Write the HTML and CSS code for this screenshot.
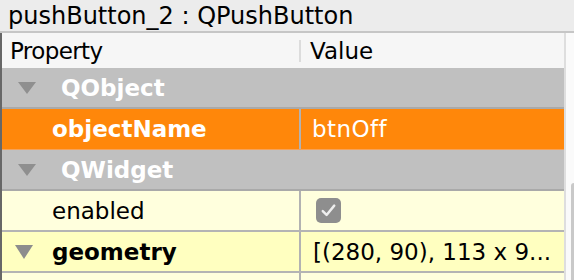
FILE: index.html
```html
<!DOCTYPE html>
<html>
<head>
<meta charset="utf-8">
<link rel="stylesheet" href="styles.css">
</head>
<body>
<div class="title">pushButton_2 : QPushButton</div>
<div class="main">
  <div class="table">
    <div class="row header">
      <div class="cell name"><span class="label">Property</span></div>
      <div class="hsep"></div>
      <div class="cell value">Value</div>
    </div>
    <div class="row group">
      <div class="cell name"><span class="tri"></span><span class="gtext">QObject</span></div>
      <div class="cell value"></div>
    </div>
    <div class="row selected">
      <div class="cell name"><span class="ptext bold">objectName</span></div>
      <div class="vsep"></div>
      <div class="cell value">btnOff</div>
    </div>
    <div class="row group">
      <div class="cell name"><span class="tri"></span><span class="gtext">QWidget</span></div>
      <div class="cell value"></div>
    </div>
    <div class="row light">
      <div class="cell name"><span class="ptext">enabled</span></div>
      <div class="vsep"></div>
      <div class="cell value"><span class="check"><svg width="17" height="15" viewBox="0 0 16 14"><path d="M2.6 7.6 L6.2 11.2 L13.4 2.4" fill="none" stroke="#eeeeee" stroke-width="2.3" stroke-linecap="round" stroke-linejoin="round"/></svg></span></div>
    </div>
    <div class="row dark">
      <div class="cell name"><span class="tri tri-y"></span><span class="ptext bold gp">geometry</span></div>
      <div class="vsep"></div>
      <div class="cell value">[(280, 90), 113 x 9...</div>
    </div>
    <div class="row light last">
      <div class="cell name"></div>
      <div class="vsep"></div>
      <div class="cell value"></div>
    </div>
  </div>
  <div class="scroll"><div class="thumb"></div></div>
</div>
</body>
</html>
```
FILE: styles.css
```css
html, body {
  margin: 0;
  padding: 0;
  width: 574px;
  height: 280px;
  overflow: hidden;
  background: #ececec;
  font-family: "DejaVu Sans", Verdana, sans-serif;
  font-size: 23px;
  color: #000;
}
.title {
  height: 31px;
  line-height: 32px;
  padding-left: 8px;
  font-size: 24px;
  background: #ececec;
  border-bottom: 2px solid #c6c6c6;
  white-space: nowrap;
}
.main {
  display: flex;
  height: 247px;
}
.table {
  flex: 1;
  border-left: 2px solid #676767;
  display: flex;
  flex-direction: column;
  overflow: hidden;
}
.scroll {
  width: 8px;
  border-left: 2px solid #dedede;
  background: #fafafa;
  position: relative;
  overflow: hidden;
}
.thumb {
  position: absolute;
  right: -3px;
  top: 150px;
  width: 6px;
  height: 120px;
  border-radius: 3px;
  background: #c9c9c9;
}
.row {
  display: flex;
  align-items: stretch;
  height: 39px;
  border-bottom: 2px solid #a9a9a9;
  flex-shrink: 0;
}
.cell {
  display: flex;
  align-items: center;
  white-space: nowrap;
  overflow: hidden;
}
.name {
  width: 297px;
  flex-shrink: 0;
}
.value {
  flex: 1;
  padding-left: 11px;
}
.header {
  height: 35px;
  border-bottom: none;
  background: #f6f6f6;
  align-items: center;
}
.header .name, .header .value { height: 35px; }
.header .label { padding-left: 8px; letter-spacing: -0.6px; }
.header .value { padding-left: 9px; }
.hsep {
  width: 2px;
  height: 22px;
  background: #dcdcdc;
  flex-shrink: 0;
}
.vsep {
  width: 2px;
  background: #b2b2b2;
  flex-shrink: 0;
}
.group {
  background: #c0c0c0;
}
.tri {
  width: 0;
  height: 0;
  margin-left: 16px;
  border-left: 9px solid transparent;
  border-right: 9px solid transparent;
  border-top: 12px solid #8f8f8f;
  flex-shrink: 0;
}
.gtext {
  margin-left: 25px;
  color: #fff;
  font-weight: bold;
}
.ptext {
  margin-left: 50px;
}
.bold {
  font-weight: bold;
}
.ptext.gp { margin-left: 19px; }
.tri-y {
  margin-left: 13px;
  border-top-width: 14px;
  border-top-color: #8d8d8d;
}
.selected {
  background: #ff870a;
  color: #fff;
  height: 40px;
  border-bottom: 1px solid #f4a25a;
}
.selected .value { letter-spacing: 0.4px; }
.light {
  background: #ffffdd;
}
.dark {
  background: #ffffc0;
}
.light, .dark { border-bottom-color: #b4b4b4; }
.light .value, .dark .value { padding-left: 12px; }
.last {
  border-bottom: none;
  flex: 1;
  height: auto;
  min-height: 0;
}
.check {
  width: 25px;
  height: 25px;
  border-radius: 5px;
  background: #8e8e8e;
  display: flex;
  align-items: center;
  justify-content: center;
  margin-left: 3px;
}
```
